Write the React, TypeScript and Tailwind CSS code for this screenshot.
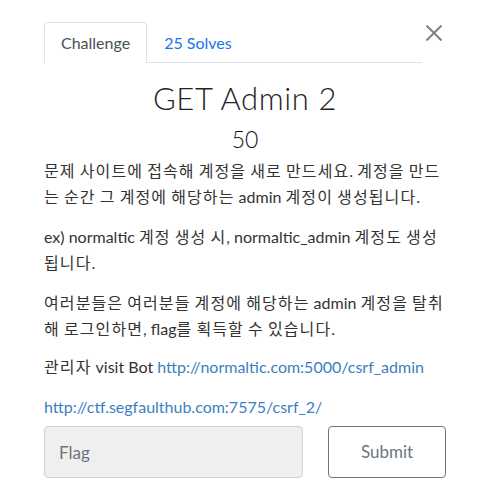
import React from 'react';

const font = "font-['Lato','Noto_Sans_CJK_KR',sans-serif]";

// Hangul runs get a little extra tracking so they are as wide as the original's Korean face
function Ko({ children }: { children: string }) {
  const parts = children.split(/([\uAC00-\uD7A3]+)/);
  return (
    <>
      {parts.map((part, i) =>
        /[\uAC00-\uD7A3]/.test(part) ? (
          <span key={i} className="tracking-[1.1px]">
            {part}
          </span>
        ) : (
          <React.Fragment key={i}>{part}</React.Fragment>
        )
      )}
    </>
  );
}

function CloseIcon() {
  return (
    <svg width="16" height="16" viewBox="0 0 16 16" fill="none">
      <path d="M0.5 0.5L15.5 15.5M15.5 0.5L0.5 15.5" stroke="#808080" strokeWidth="2" />
    </svg>
  );
}

export default function App() {
  return (
    <div className={`w-[478px] h-[494px] bg-white pt-[22px] pl-[44px] pr-[32px] ${font}`}>
      {/* tabs + close */}
      <div className="flex items-start">
        <nav className="flex flex-1 h-[41px] items-end border-b border-[#dee2e6]">
          <button className="h-[41px] -mb-px px-4 border border-b-0 border-[#dee2e6] rounded-t-[4px] bg-white text-[16px] text-[#495057]">
            Challenge
          </button>
          <button className="h-[41px] -mb-px px-4 border border-transparent text-[16px] text-[#1a73e8]">
            25 Solves
          </button>
        </nav>
        <button className="mx-[4px] mt-[3px]">
          <CloseIcon />
        </button>
      </div>

      {/* heading */}
      <h2 className="mt-[16px] text-center text-[31px] leading-[38px] tracking-[0.6px] font-light text-[#212529]">
        GET Admin 2
      </h2>
      <h3 className="mt-[9px] text-center text-[23px] leading-[26px] font-light text-[#111111]">50</h3>

      {/* description */}
      <div className="mt-[6px] text-[16px] leading-[26px] text-[#333333]">
        <p className="mb-[14px]">
          <Ko>문제 사이트에 접속해 계정을 새로 만드세요. 계정을 만드</Ko>
          <br />
          <Ko>는 순간 그 계정에 해당하는 admin 계정이 생성됩니다.</Ko>
        </p>
        <p className="mb-[14px]">
          <Ko>ex) normaltic 계정 생성 시, normaltic_admin 계정도 생성</Ko>
          <br />
          <Ko>됩니다.</Ko>
        </p>
        <p className="mb-[12px]">
          <Ko>여러분들은 여러분들 계정에 해당하는 admin 계정을 탈취</Ko>
          <br />
          <Ko>해 로그인하면, flag를 획득할 수 있습니다.</Ko>
        </p>
        <p className="mb-[14px]">
          <Ko>관리자 visit Bot </Ko>
          <a className="text-[#3a7fc2]">http://normaltic.com:5000/csrf_admin</a>
        </p>
        <p>
          <a className="text-[#3a7fc2]">http://ctf.segfaulthub.com:7575/csrf_2/</a>
        </p>
      </div>

      {/* flag form */}
      <div className="mt-[6px] flex gap-[25px]">
        <input
          placeholder="Flag"
          className="w-[259px] h-[52px] px-[14px] rounded-[4px] border border-[#ced4da] bg-[#efefef] text-[17px] placeholder:text-[#6c757d] outline-none"
        />
        <button className="w-[118px] h-[52px] rounded-[4px] border border-[#6c757d] bg-white text-[17px] text-[#6c757d]">
          Submit
        </button>
      </div>
    </div>
  );
}
